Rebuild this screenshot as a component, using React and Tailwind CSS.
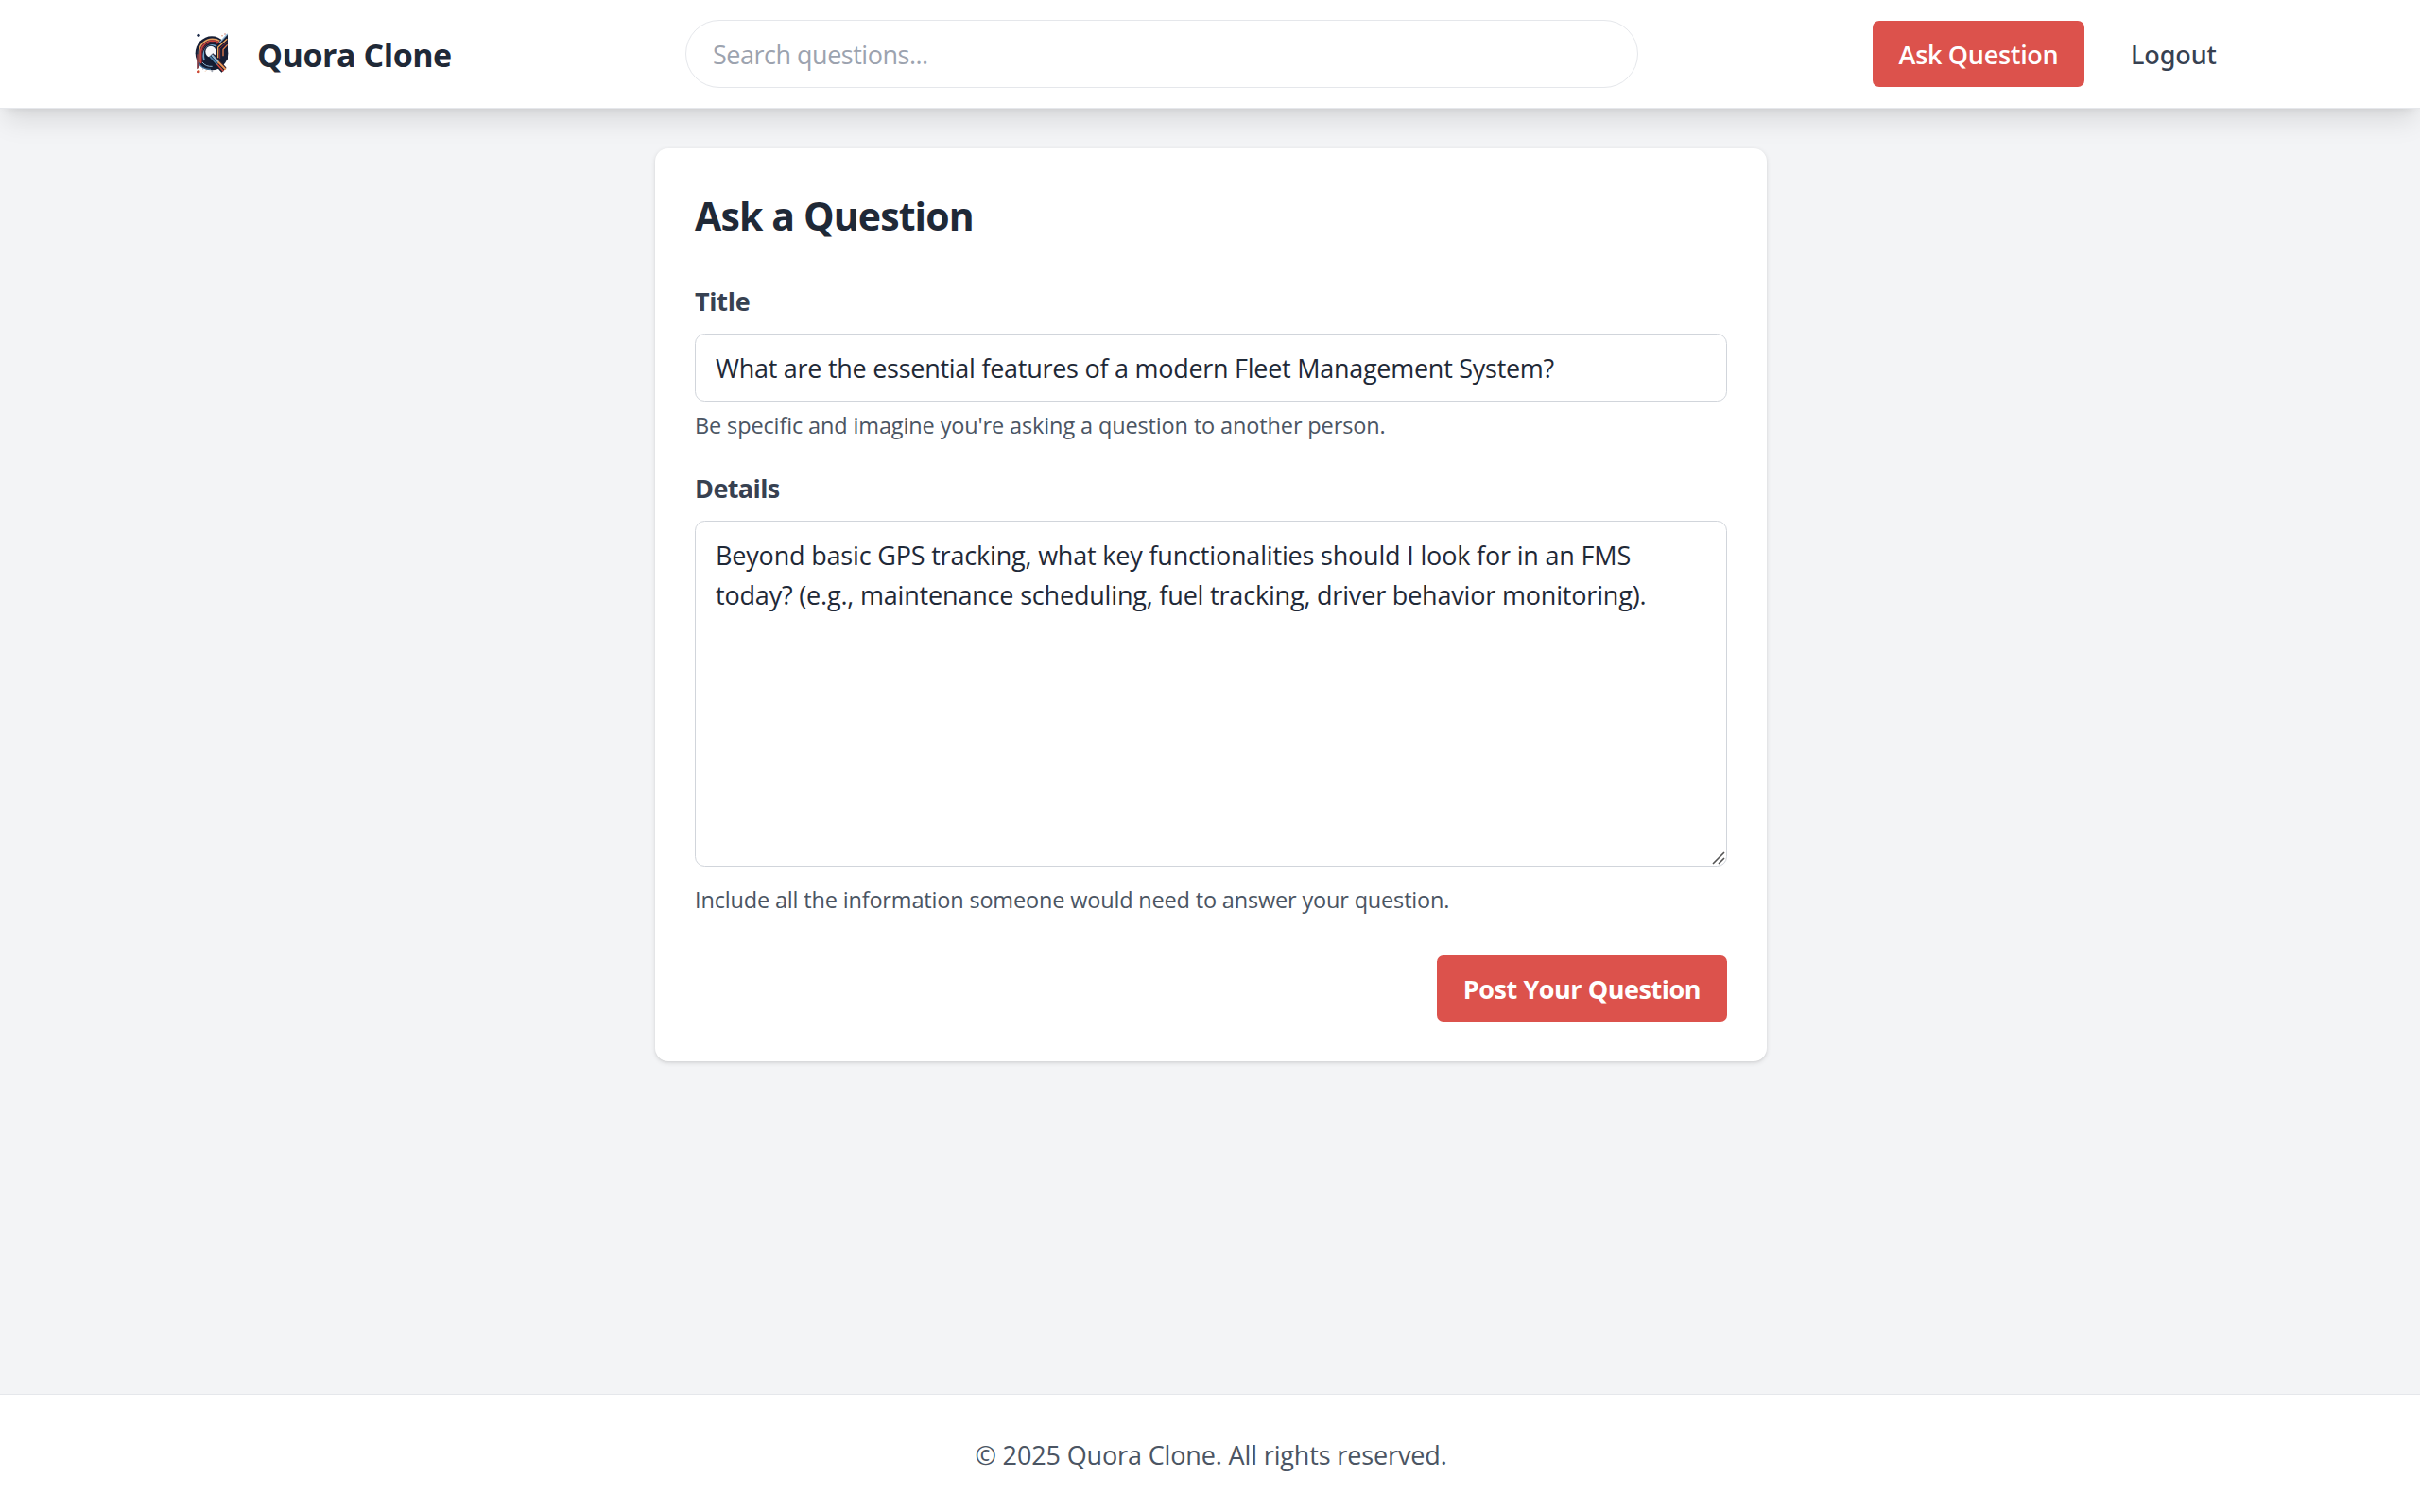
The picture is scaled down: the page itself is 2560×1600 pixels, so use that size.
function Logo() {
  return (
    <svg width="42" height="48" viewBox="42 36 126 144" fill="none" className="shrink-0">
      <circle cx="60" cy="52" r="5" fill="#1b2a49" />
      <circle cx="60" cy="167" r="5" fill="#e2703a" />
      <circle cx="57" cy="168" r="3" fill="#c23b3b" />
      <circle cx="74" cy="159" r="2" fill="#b9b3b8" />
      <circle cx="103" cy="166" r="3" fill="#a9adb8" />
      <circle cx="135" cy="53" r="2.2" fill="#d98a6a" />
      <circle cx="144" cy="48" r="2" fill="#b7564f" />
      <path d="M80 168 L92 156" stroke="#e8b48c" strokeWidth="1.6" />
      <ellipse cx="102" cy="109" rx="52" ry="54" fill="#151d33" />
      <path d="M55 160 V100 L64 92 V150" fill="#24304d" />
      <path d="M62 139 V104 C63 80 82 64 104 64 C114 64 121 66 127 70" stroke="#e9a060" strokeWidth="5" />
      <path d="M67 142 V106 C68 87 84 70 104 69 C112 69 119 71 124 75" stroke="#c8413c" strokeWidth="5" />
      <path d="M71 140 V108 C72 92 86 76 103 75 C110 75 116 77 121 80" stroke="#7d2635" strokeWidth="3" />
      <path d="M57 158 V112" stroke="#c8413c" strokeWidth="3" />
      <path d="M78 132 C72 110 79 88 100 84 C107 83 112 84 118 88" stroke="#6fa3c8" strokeWidth="5" />
      <path d="M60 138 C66 152 80 161 99 160" stroke="#3f6f99" strokeWidth="4" />
      <path d="M72 138 C80 148 90 152 104 151" stroke="#8cb4cf" strokeWidth="3" />
      <ellipse cx="99" cy="106" rx="21" ry="22" fill="#101930" />
      <ellipse cx="99" cy="104" rx="17" ry="18" fill="#f7f7f9" />
      <path d="M118 86 L153 47 V128 L132 132 L118 122Z" fill="#151d33" />
      <path d="M126 76 L152 48" stroke="#8fb3cf" strokeWidth="4" />
      <path d="M122 124 V90 L151 64" stroke="#f0a45c" strokeWidth="4" />
      <path d="M128 126 V94 L151 73" stroke="#8b2635" strokeWidth="3" />
      <path d="M138 118 V97 L152 82" stroke="#e07a4c" strokeWidth="4" />
      <path d="M98 116 L141 163" stroke="#111a30" strokeWidth="21" />
      <path d="M105 112 L146 156" stroke="#3b2430" strokeWidth="5" />
      <path d="M102 114 L124 138" stroke="#8fb9d6" strokeWidth="6" />
      <path d="M122 136 L146 161" stroke="#f09a55" strokeWidth="6" />
      <path d="M96 119 L120 145" stroke="#4f81a9" strokeWidth="5" />
      <path d="M119 144 L139 166" stroke="#c8453c" strokeWidth="5" />
    </svg>
  );
}

function Header() {
  return (
    <header className="relative z-10 flex h-[115px] items-start border-b border-[#e5e7eb] bg-white shadow-[0_17.5px_26px_-5px_rgba(0,0,0,0.1),0_7px_10.5px_-7px_rgba(0,0,0,0.1)]">
      <div className="flex w-[725px] shrink-0 items-start pt-8 pl-[204px]">
        <Logo />
        <span className="ml-[26px] pt-[5px] text-[34px] leading-[42px] font-bold tracking-[-0.46px] whitespace-nowrap text-[#1f2937]">
          Quora Clone
        </span>
      </div>
      <input
        type="text"
        placeholder="Search questions..."
        className="mt-[21px] h-[72px] w-[1008px] shrink-0 rounded-full border border-[#e5e7eb] bg-white px-7 text-[27px] tracking-[-0.49px] placeholder:text-[#9ca3af]"
      />
      <nav className="ml-[248px] flex items-center pt-[22px]">
        <button className="h-[70px] w-[224px] rounded-[7px] bg-[#dc524c] pt-0.5 text-[27px] font-semibold tracking-[-0.3px] whitespace-nowrap text-white">
          Ask Question
        </button>
        <a className="ml-[49px] pt-0.5 font-['Noto_Sans'] text-[27px] leading-[42px] font-medium tracking-[-0.1px] text-[#374151]">
          Logout
        </a>
      </nav>
    </header>
  );
}

function AskForm() {
  return (
    <form className="mt-[42px] ml-[693px] flex w-[1176px] flex-col rounded-[14px] bg-white p-[42px] shadow-[0_1.75px_5.25px_rgba(0,0,0,0.1),0_1.75px_3.5px_-1.75px_rgba(0,0,0,0.1)]">
      <h1 className="-mt-0.5 mb-[38px] text-[41px] leading-[63px] font-bold tracking-[-0.87px] text-[#1f2937]">
        Ask a Question
      </h1>
      <label className="mb-[13px] text-[27px] leading-[42px] font-bold tracking-[-0.3px] text-[#374151]">Title</label>
      <input
        defaultValue="What are the essential features of a modern Fleet Management System?"
        className="h-[72px] w-[1092px] rounded-[10.5px] border border-[#d1d5db] px-[21px] text-[27px] tracking-[-0.27px] text-[#1f2937]"
      />
      <p className="mt-2 text-[23.5px] leading-[35px] tracking-[-0.13px] text-[#4b5563]">
        Be specific and imagine you're asking a question to another person.
      </p>
      <label className="mt-7 mb-[13px] text-[27px] leading-[42px] font-bold tracking-[-0.6px] text-[#374151]">
        Details
      </label>
      <div className="relative h-[366px]">
        <textarea
          defaultValue={
            "Beyond basic GPS tracking, what key functionalities should I look for in an FMS\ntoday? (e.g., maintenance scheduling, fuel tracking, driver behavior monitoring)."
          }
          className="block h-[366px] w-[1092px] resize-none overflow-hidden rounded-[10.5px] border border-[#d1d5db] px-[21px] py-[15px] text-[27px] leading-[42px] tracking-[-0.185px] text-[#1f2937]"
        />
        <svg className="absolute right-[2px] bottom-[2px]" width="14" height="14" viewBox="0 0 14 14" stroke="#555" strokeWidth="1.6">
          <path d="M1 13 L13 1 M7 13 L13 7" />
        </svg>
      </div>
      <p className="mt-[18px] text-[23.5px] leading-[35px] tracking-[-0.17px] text-[#4b5563]">
        Include all the information someone would need to answer your question.
      </p>
      <button className="mt-[41px] h-[70px] w-[307px] self-end rounded-[7px] bg-[#dc524c] pt-0.5 text-[27px] font-bold tracking-[-0.45px] text-white">
        Post Your Question
      </button>
    </form>
  );
}

export default function App() {
  return (
    <div className="flex h-[1600px] w-[2560px] flex-col overflow-hidden bg-[#f3f4f6] font-['Open_Sans','Noto_Sans',sans-serif]">
      <Header />
      <main className="grow">
        <AskForm />
      </main>
      <footer className="flex h-[125px] items-center justify-center border-t border-[#e5e7eb] bg-white pt-[3px] pl-[2px] text-[27px] leading-[42px] tracking-[-0.14px] text-[#4b5563]">
        © 2025 Quora Clone. All rights reserved.
      </footer>
    </div>
  );
}
